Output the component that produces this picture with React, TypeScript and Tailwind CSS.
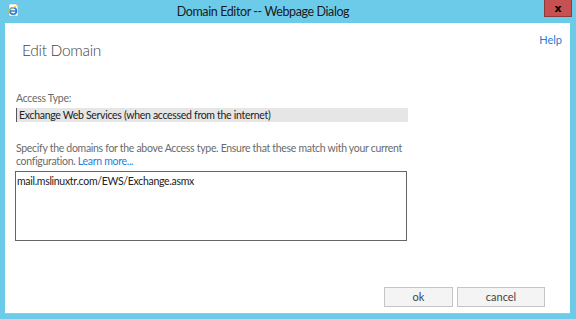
import React from "react";

const font = { fontFamily: 'Lato, "Open Sans", sans-serif' };

function IeIcon() {
  return (
    <svg width="14" height="14" viewBox="0 0 14 14">
      <path d="M3 1h7l2 2v10H3z" fill="#fff" stroke="#9ab" strokeWidth="0.6" />
      <circle cx="7.2" cy="8" r="3.2" fill="none" stroke="#1f7fd6" strokeWidth="1.6" />
      <path d="M4.2 8h6" stroke="#1f7fd6" strokeWidth="1.4" />
      <path d="M1.5 10.5c1-3 5-6.5 9-7" fill="none" stroke="#f2b81e" strokeWidth="1.2" />
    </svg>
  );
}

export default function App() {
  return (
    <div className="w-[576px] h-[319px] bg-[#6dcbea] flex flex-col overflow-hidden" style={font}>
      {/* title bar */}
      <div className="h-[23px] relative flex items-center justify-center shrink-0">
        <div className="absolute left-[6px] top-[3px]">
          <IeIcon />
        </div>
        <span className="text-[12.5px] tracking-[-0.4px] text-[#1a1a1a] ml-[-50px] mt-[1px]">Domain Editor -- Webpage Dialog</span>
        <div className="absolute left-[544px] top-0 w-[28px] h-[17px] bg-[#c75050] border border-[#8a3a3a] border-t-0 flex items-center justify-center">
          <span className="text-[11px] font-bold text-black leading-none" style={{ fontFamily: '"DejaVu Sans", sans-serif' }}>x</span>
        </div>
      </div>

      {/* content */}
      <div className="ml-[5px] mr-[6px] mb-[5px] flex-1 bg-white border-b border-[#a9c4cf] flex flex-col">
        <div className="flex justify-end pr-[8px] pt-[10px] h-[17px]">
          <span className="text-[11px] text-[#1e7ed8] leading-[14px]">Help</span>
        </div>
        <div className="pl-[17px] text-[15.5px] tracking-[-0.3px] text-[#444] font-light leading-[20px] h-[20px]">Edit Domain</div>

        <div className="pl-[11px] pt-[31px] text-[10.5px] tracking-[-0.3px] leading-[14px]">
          <div className="text-[#6a6a6a] h-[14px]">Access Type:</div>
          <div className="mt-[3px] w-[392px] h-[14px] bg-[#e6e6e6] border-l border-[#555] flex items-center pl-[2px]">
            <span className="text-[#222]">Exchange Web Services (when accessed from the internet)</span>
          </div>

          <p className="mt-[20px] text-[#6a6a6a] leading-[13px] w-[390px]">
            Specify the domains for the above Access type. Ensure that these match with your current configuration.{" "}
            <span className="text-[#1e7ed8]">Learn more...</span>
          </p>

          <div className="mt-[3px] -ml-[1px] w-[392px] h-[70px] border border-[#666] pl-[1px] pt-[2px] text-[#222]">
            mail.mslinuxtr.com/EWS/Exchange.asmx
          </div>
        </div>

        <div className="flex-1" />
        <div className="flex justify-end gap-[4px] pr-[25px] pb-[6px]">
          <button className="w-[69px] h-[20px] bg-[#f4f4f4] border border-[#c4c4c4] text-[11px] text-[#444]">ok</button>
          <button className="w-[88px] h-[20px] bg-[#f4f4f4] border border-[#c4c4c4] text-[11px] text-[#444]">cancel</button>
        </div>
      </div>
    </div>
  );
}
